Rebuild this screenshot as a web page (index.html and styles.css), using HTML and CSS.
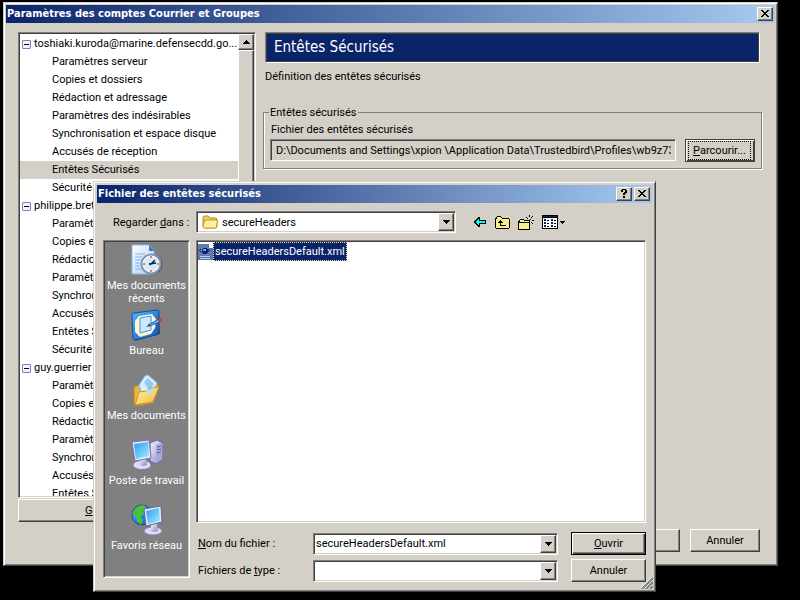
FILE: index.html
```html
<!DOCTYPE html>
<html lang="fr">
<head>
    <meta charset="UTF-8">
    <meta name="viewport" content="width=device-width, initial-scale=1.0">
    <title>Paramètres des comptes Courrier et Groupes</title>
    <link rel="stylesheet" href="styles.css">
</head>
<body>
    <div class="window accounts">
        <div class="titlebar">
            <h1>Paramètres des comptes Courrier et Groupes</h1>
            <button type="button" class="caption-button" aria-label="Fermer">
                <svg width="8" height="7" viewBox="0 0 8 7" shape-rendering="crispEdges"><path d="M0 0h2v1h1v1h2v-1h1v-1h2v1h-1v1h-1v1h-1v1h1v1h1v1h1v1h-2v-1h-1v-1h-2v1h-1v1h-2v-1h1v-1h1v-1h1v-1h-1v-1h-1v-1h-1z"/></svg>
            </button>
        </div>
        <div class="accounts-body">
            <div class="sidebar">
                <div class="tree">
                    <ul class="tree-list">
                        <li>
                            <div class="account"><button type="button" class="toggle" aria-label="Réduire"></button><span>toshiaki.kuroda@marine.defensecdd.go...</span></div>
                            <ul>
                                <li>Paramètres serveur</li>
                                <li>Copies et dossiers</li>
                                <li>Rédaction et adressage</li>
                                <li>Paramètres des indésirables</li>
                                <li>Synchronisation et espace disque</li>
                                <li>Accusés de réception</li>
                                <li class="selected">Entêtes Sécurisés</li>
                                <li>Sécurité</li>
                            </ul>
                        </li>
                        <li>
                            <div class="account"><button type="button" class="toggle" aria-label="Réduire"></button><span>philippe.bret</span></div>
                            <ul>
                                <li>Paramètres serveur</li>
                                <li>Copies et dossiers</li>
                                <li>Rédaction et adressage</li>
                                <li>Paramètres des indésirables</li>
                                <li>Synchronisation et espace disque</li>
                                <li>Accusés de réception</li>
                                <li>Entêtes Sécurisés</li>
                                <li>Sécurité</li>
                            </ul>
                        </li>
                        <li>
                            <div class="account"><button type="button" class="toggle" aria-label="Réduire"></button><span>guy.guerrier</span></div>
                            <ul>
                                <li>Paramètres serveur</li>
                                <li>Copies et dossiers</li>
                                <li>Rédaction et adressage</li>
                                <li>Paramètres des indésirables</li>
                                <li>Synchronisation et espace disque</li>
                                <li>Accusés de réception</li>
                                <li>Entêtes Sécurisés</li>
                            </ul>
                        </li>
                    </ul>
                    <div class="scrollbar">
                        <button type="button" class="arrow-button" aria-label="Haut">
                            <svg width="7" height="4" viewBox="0 0 7 4" shape-rendering="crispEdges"><path d="M3 0h1v1h1v1h1v1h1v1h-7v-1h1v-1h1v-1h1z"/></svg>
                        </button>
                        <div class="thumb"></div>
                    </div>
                </div>
                <button type="button" class="button manage"><u>G</u>estion des comptes</button>
            </div>
            <div class="panel">
                <h2>Entêtes Sécurisés</h2>
                <p>Définition des entêtes sécurisés</p>
                <fieldset>
                    <legend>Entêtes sécurisés</legend>
                    <label for="path">Fichier des entêtes sécurisés</label>
                    <div class="path-row">
                        <input type="text" id="path" readonly value="D:\Documents and Settings\xpion \Application Data\Trustedbird\Profiles\wb9z73me.default\secureHeaders">
                        <button type="button" class="button browse"><span><u>P</u>arcourir...</span></button>
                    </div>
                </fieldset>
            </div>
        </div>
        <div class="accounts-actions">
            <button type="button" class="button" aria-label="OK"></button>
            <button type="button" class="button">Annuler</button>
        </div>
    </div>

    <div class="window dialog">
        <div class="titlebar">
            <h1>Fichier des entêtes sécurisés</h1>
            <button type="button" class="caption-button" aria-label="Aide">
                <svg width="6" height="9" viewBox="0 0 6 9" shape-rendering="crispEdges"><path d="M1 0h4v1h1v3h-1v1h-1v1h-2v-2h1v-1h1v-2h-2v2h-2v-2h1zM2 7h2v2h-2z"/></svg>
            </button>
            <button type="button" class="caption-button" aria-label="Fermer">
                <svg width="8" height="7" viewBox="0 0 8 7" shape-rendering="crispEdges"><path d="M0 0h2v1h1v1h2v-1h1v-1h2v1h-1v1h-1v1h-1v1h1v1h1v1h1v1h-2v-1h-1v-1h-2v1h-1v1h-2v-1h1v-1h1v-1h1v-1h-1v-1h-1v-1h-1z"/></svg>
            </button>
        </div>
        <div class="lookin">
            <label for="folder">Regarder <u>d</u>ans :</label>
            <div class="combo">
                <svg class="folder-icon" width="16" height="16" viewBox="0 0 16 16">
                    <path d="M1 4q0-2 2-2h3l2 2h5q2 0 2 2v6q0 2-2 2h-10q-2 0-2-2z" fill="#f3cf55" stroke="#b88a18"/>
                    <path d="M1 12l2-6h12.500l-1 7q0 1-1 1h-11q-1 0-1.500-1z" fill="#fff0a0" stroke="#c3961f"/>
                </svg>
                <select id="folder"><option>secureHeaders</option></select>
                <span class="arrow-button"><svg width="7" height="4" viewBox="0 0 7 4" shape-rendering="crispEdges"><path d="M0 0h7v1h-1v1h-1v1h-1v1h-1v-1h-1v-1h-1v-1h-1z"/></svg></span>
            </div>
            <div class="tools">
                <button type="button" aria-label="Dossier précédent">
                    <svg width="13" height="10" viewBox="0 0 13 10" shape-rendering="crispEdges"><path d="M0 4h1v-1h1v-1h1v-1h1v-1h2v3h6v4h-6v3h-2v-1h-1v-1h-1v-1h-1v-1h-1z"/><path d="M2 4h1v-1h1v-1h1v2h6v2h-6v2h-1v-1h-1v-1h-1z" fill="#00ffff"/></svg>
                </button>
                <button type="button" aria-label="Dossier parent">
                    <svg width="15" height="13" viewBox="0 0 15 13" shape-rendering="crispEdges"><path d="M1 1h1v-1h4v1h1v1h7v1h1v9h-1v1h-13v-1h-1v-10h1z"/><path d="M2 1h4v1h1v1h7v9h-13v-9h1z" fill="#f4f090"/><path d="M3 6h1v-1h1v-1h1v1h1v1h1v1h-2v2h5v1h-6v-3h-2z"/></svg>
                </button>
                <button type="button" aria-label="Nouveau dossier">
                    <svg width="16" height="15" viewBox="0 0 16 15" shape-rendering="crispEdges"><path d="M1 5h1v-1h4v1h6v10h-12v-9h1z"/><path d="M2 5h4v1h5v8h-10v-6h1z" fill="#f4f090"/><path d="M1 7h10v1h-10zM11 0h1v2h-1zM8 2h1v1h-1zM9 3h1v1h-1zM14 1h1v1h-1zM13 2h1v1h-1zM12 4h1v1h-1zM14 5h2v1h-2zM13 7h1v1h-1zM14 8h1v1h-1zM11 7h1v2h-1z"/></svg>
                </button>
                <button type="button" class="views" aria-label="Affichage">
                    <svg width="23" height="14" viewBox="0 0 23 14" shape-rendering="crispEdges"><path d="M0 0h16v14h-16z"/><path d="M1 3h14v10h-14z" fill="#fff"/><path d="M1 1h14v1h-14zM2 4h2v2h-2zM2 7h2v2h-2zM2 10h2v2h-2zM9 4h2v2h-2zM9 7h2v2h-2zM9 10h2v2h-2z" fill="#0a246a"/><path d="M5 5h2v1h-2zM5 8h2v1h-2zM5 11h2v1h-2zM12 5h2v1h-2zM12 8h2v1h-2zM12 11h2v1h-2zM18 6h5v1h-1v1h-1v1h-1v-1h-1v-1h-1z"/></svg>
                </button>
            </div>
        </div>
        <div class="dialog-body">
            <div class="places">
                <a href="#">
                    <svg width="32" height="32" viewBox="0 0 32 32">
                        <defs>
                            <linearGradient id="paper" x1="0" y1="0" x2="1" y2="1"><stop offset="0" stop-color="#fff"/><stop offset="1" stop-color="#a9cdfa"/></linearGradient>
                            <linearGradient id="blue" x1="0" y1="0" x2="1" y2="1"><stop offset="0" stop-color="#5ab8f8"/><stop offset="1" stop-color="#0a50c4"/></linearGradient>
                            <linearGradient id="glass" x1="0" y1="0" x2="1" y2="1"><stop offset="0" stop-color="#2c9cf4"/><stop offset="1" stop-color="#a0f0ff"/></linearGradient>
                            <linearGradient id="gold" x1="0" y1="0" x2="1" y2="1"><stop offset="0" stop-color="#fff3a8"/><stop offset="1" stop-color="#f2b93c"/></linearGradient>
                            <linearGradient id="case" x1="0" y1="0" x2="1" y2="1"><stop offset="0" stop-color="#f4f4ff"/><stop offset="1" stop-color="#8684c4"/></linearGradient>
                        </defs>
                        <path d="M1 1h17l5 6v23h-22z" fill="url(#paper)" stroke="#8eb5ec"/>
                        <path d="M18 1v6h5z" fill="#3b78cf"/>
                        <path d="M4 10h10M4 13h7M4 16h6M4 19h5M4 22h6M4 25h8" stroke="#80b4f0"/>
                        <circle cx="21.500" cy="20.500" r="10" fill="#4c5868"/>
                        <circle cx="20" cy="20" r="9.500" fill="#f4faff" stroke="#8198ad" stroke-width="2"/>
                        <circle cx="20" cy="20" r="7" fill="#d2eaff"/>
                        <path d="M18 20l7-1M19 21l5-5" stroke="#123" stroke-width="1.500"/>
                        <path d="M20 12v2M20 26v2M12 20h2M26 20h2" stroke="#e06030" stroke-width="1.500"/>
                    </svg>
                    <span>Mes documents récents</span>
                </a>
                <a href="#">
                    <svg width="32" height="32" viewBox="0 0 32 32">
                        <path d="M3 6l25-3 1 22-25 7z" fill="#37485f"/>
                        <path d="M1 6q0-2 2-2l23-3q2 0 2 2l-1 21q0 2-2 2l-21 5q-2 0-2-2z" fill="url(#blue)" stroke="#0b4fae"/>
                        <path d="M8 7l13-2 4 5-1 9-4 6-11 3-5-5v-11z" fill="#fff7cf"/>
                        <path d="M9 9l11-2v14l-11 3z" fill="#c9eaff" stroke="#4292df"/>
                        <path d="M17 16l11-6 1 3-11 4z" fill="#6ab4f0" stroke="#1a5cb0"/>
                        <path d="M15 18l3-2 1 1z" fill="#111"/>
                        <circle cx="29" cy="11" r="2" fill="#d33a18"/>
                    </svg>
                    <span>Bureau</span>
                </a>
                <a href="#">
                    <svg width="32" height="32" viewBox="0 0 32 32">
                        <path d="M3 13l5-2 3 2 14-5 3 5-6 16-17 3-2-1z" fill="#edb73d" stroke="#c2861a"/>
                        <path d="M8 11l6-9 3-1 9 8-5 10-10 1z" fill="#d8efff" stroke="#83bdf0"/>
                        <path d="M13 8l4-4 6 6-5 7z" fill="#93cbf7"/>
                        <path d="M4 31l4-13 8-1 3-3 9-1-6 15z" fill="url(#gold)" stroke="#c98d20"/>
                        <path d="M14 17l10-4-4 8z" fill="#b6dcf6"/>
                    </svg>
                    <span>Mes documents</span>
                </a>
                <a href="#">
                    <svg width="32" height="32" viewBox="0 0 32 32">
                        <path d="M19 4l7-3 6 3v17l-7 4-6-3z" fill="url(#case)" stroke="#6765a6"/>
                        <path d="M25 6l6-2v16l-6 3z" fill="#aaa8db"/>
                        <path d="M26 8l4-1M26 11l4-1M26 14l4-1" stroke="#5c5a99"/>
                        <path d="M28 17h2v2h-2z" fill="#84d45a"/>
                        <ellipse cx="11" cy="26" rx="9" ry="4.500" fill="#dddcf2" stroke="#8280ba"/>
                        <path d="M9 19h6l1 7q-4 2-7 0z" fill="url(#case)"/>
                        <path d="M1 3l17-2 2 18-16 3z" fill="#e8e8fa" stroke="#7775b0"/>
                        <path d="M3 5l14-2 1 14-13 3z" fill="url(#glass)"/>
                    </svg>
                    <span>Poste de travail</span>
                </a>
                <a href="#">
                    <svg width="32" height="32" viewBox="0 0 32 32">
                        <circle cx="11" cy="11" r="10" fill="url(#blue)" stroke="#1848a0"/>
                        <path d="M4 5q4-4 9-4l2 3-3 3 1 3-4 2 3 4-2 5-4-4-1-5-4-2z" fill="#48c431"/>
                        <ellipse cx="22" cy="27" rx="9" ry="4" fill="#dddcf2" stroke="#8280ba"/>
                        <path d="M20 20h6l1 7q-4 2-7 0z" fill="url(#case)"/>
                        <path d="M13 5l17-3 1 16-16 4z" fill="#e8e8fa" stroke="#6563a3"/>
                        <path d="M15 7l13-3 1 13-12 3z" fill="url(#glass)"/>
                    </svg>
                    <span>Favoris réseau</span>
                </a>
            </div>
            <div class="content">
                <ul class="files">
                    <li>
                        <svg width="16" height="16" viewBox="0 0 16 16" shape-rendering="crispEdges"><path d="M1 0h11l4 4v12h-15z" fill="#6478b4"/><path d="M12 0h1v1h1v1h1v1h1v1h-4z" fill="#fff"/><path d="M2 6h1v-1h1v1h-1v1h1v1h-1v-1h-1zM13 6h-1v-1h-1v1h1v1h-1v1h1v-1h1z" fill="#0a246a"/><path d="M6 4h4v1h1v4h-1v1h-4v-1h-1v-4h1z" fill="#0a246a"/><path d="M6 5h3v2h-3z" fill="#78a4d8"/><path d="M3 12h10v1h-10zM3 14h10v1h-10z" fill="#b4c8ec"/></svg>
                        <span>secureHeadersDefault.xml</span>
                    </li>
                </ul>
                <div class="fields">
                    <label for="filename"><u>N</u>om du fichier :</label>
                    <div class="combo">
                        <input type="text" id="filename" value="secureHeadersDefault.xml">
                        <button type="button" class="arrow-button" aria-label="Liste"><svg width="7" height="4" viewBox="0 0 7 4" shape-rendering="crispEdges"><path d="M0 0h7v1h-1v1h-1v1h-1v1h-1v-1h-1v-1h-1v-1h-1z"/></svg></button>
                    </div>
                    <button type="button" class="button default"><u>O</u>uvrir</button>
                    <label for="filetype">Fichiers de <u>t</u>ype :</label>
                    <div class="combo">
                        <select id="filetype"><option></option></select>
                        <span class="arrow-button"><svg width="7" height="4" viewBox="0 0 7 4" shape-rendering="crispEdges"><path d="M0 0h7v1h-1v1h-1v1h-1v1h-1v-1h-1v-1h-1v-1h-1z"/></svg></span>
                    </div>
                    <button type="button" class="button">Annuler</button>
                </div>
            </div>
        </div>
        <svg class="grip" width="12" height="12" viewBox="0 0 12 12"><path d="M0 11L11 0M4 11L11 4M8 11L11 8" stroke="#fff"/><path d="M1 12L12 1M5 12L12 5M9 12L12 9" stroke="#808080" stroke-width="2"/></svg>
    </div>
</body>
</html>
```

FILE: styles.css
```css
* {
    box-sizing: border-box;
}

body {
    margin: 0;
    height: 100vh;
    display: flex;
    padding: 2px 22px 34px 3px;
    background: #000;
    color: #000;
    font-family: Roboto, Tahoma, sans-serif;
    font-size: 11px;
    line-height: 13px;
    overflow: hidden;
}

ul {
    list-style: none;
    margin: 0;
    padding: 0;
}

button, input, select {
    font: inherit;
    color: inherit;
    margin: 0;
    padding: 0;
    border: none;
    border-radius: 0;
    outline: none;
}

.window {
    display: flex;
    flex-direction: column;
    background: #d4d0c8;
    border: 1px solid;
    border-color: #d4d0c8 #404040 #404040 #d4d0c8;
    box-shadow: inset 1px 1px #fff, inset -1px -1px #808080;
}

.accounts {
    flex: 1;
    min-width: 0;
    padding: 2px;
}

.dialog {
    position: absolute;
    top: 181px;
    left: 93px;
    right: 144px;
    bottom: 8px;
    padding: 3px;
}

.titlebar {
    display: flex;
    align-items: center;
    flex: none;
    height: 18px;
    padding: 0 2px 0 1px;
    gap: 2px;
    background: linear-gradient(to right, #0a246a, #a6caf0);
}

.titlebar h1 {
    flex: 1;
    margin: 0;
    font-family: "DejaVu Sans Condensed", Tahoma, sans-serif;
    font-size: 11px;
    line-height: 18px;
    color: #fff;
    white-space: nowrap;
}

.caption-button, .arrow-button, .button, .thumb {
    display: flex;
    align-items: center;
    justify-content: center;
    flex: none;
    background: #d4d0c8;
    border: 1px solid;
    border-color: #fff #404040 #404040 #fff;
    box-shadow: inset -1px -1px #808080;
}

.caption-button {
    width: 16px;
    height: 14px;
    padding: 0 1px 1px 0;
}

.button {
    width: 70px;
    height: 23px;
    padding-bottom: 1px;
}

.accounts-body {
    flex: 1;
    min-height: 0;
    display: flex;
    gap: 7px;
    padding: 9px 13px 0 12px;
}

.sidebar {
    display: flex;
    flex-direction: column;
    flex: none;
    width: 238px;
}

.tree, .files, .places, .combo, .path-row input, .panel h2 {
    border: 1px solid;
    border-color: #808080 #fff #fff #808080;
    box-shadow: inset 1px 1px #404040, inset -1px -1px #d4d0c8;
}

.tree {
    flex: 1;
    min-height: 0;
    display: flex;
    padding: 1px;
    background: #fff;
}

.tree-list {
    flex: 1;
    min-width: 0;
    padding-top: 1px;
    overflow: hidden;
    line-height: 18px;
    white-space: nowrap;
}

.tree-list ul li {
    padding-left: 32px;
}

.tree-list .selected {
    background: #d4d0c8;
}

.account {
    display: flex;
    align-items: center;
    gap: 3px;
    padding-left: 2px;
}

.toggle {
    flex: none;
    width: 9px;
    height: 9px;
    border: 1px solid #7b7fc4;
    border-radius: 1px;
    background: linear-gradient(#000, #000) center / 5px 1px no-repeat #f4f4fa;
}

.scrollbar {
    display: flex;
    flex-direction: column;
    width: 16px;
}

.arrow-button {
    width: 16px;
    height: 16px;
}

.thumb {
    flex: 1;
}

.manage {
    width: auto;
    margin-top: 1px;
}

.panel {
    flex: 1;
    min-width: 0;
}

.panel h2 {
    margin: 0 2px;
    height: 31px;
    padding-left: 8px;
    background: #0a246a;
    box-shadow: inset 0 0 0 1px #404040;
    color: #fff;
    font-family: "DejaVu Sans Condensed", Tahoma, sans-serif;
    font-size: 15px;
    font-weight: normal;
    line-height: 29px;
}

.panel p {
    margin: 7px 2px 23px;
}

fieldset {
    margin: 0;
    min-width: 0;
    padding: 4px 6px 6px;
    border: 1px solid #808080;
    box-shadow: inset 1px 0 #fff, 1px 1px #fff;
}

legend {
    margin-left: -1px;
    padding: 0 1px;
}

fieldset label {
    display: block;
    margin: 0 1px 3px;
}

.path-row {
    display: flex;
    gap: 9px;
    align-items: flex-start;
}

.path-row input {
    flex: 1;
    min-width: 0;
    height: 22px;
    padding: 0 4px 0 5px;
    background: #d4d0c8;
}

.browse {
    border-color: #404040;
    box-shadow: inset 1px 1px #fff, inset -1px -1px #404040;
    padding: 0;
}

.browse span {
    border: 1px dotted #000;
    padding: 2px 4px;
    margin-right: 1px;
}

.accounts-actions {
    display: flex;
    justify-content: flex-end;
    gap: 10px;
    padding: 7px 15px 11px;
}

.lookin {
    display: flex;
    align-items: center;
    padding: 8px 6px 7px 16px;
}

.lookin label {
    width: 83px;
}

.combo {
    display: flex;
    align-items: center;
    height: 22px;
    padding: 2px 1px 2px 2px;
    background: #fff;
}

.combo input, .combo select {
    flex: 1;
    min-width: 0;
    height: 18px;
    padding-left: 0;
    appearance: none;
    background: #fff;
}

.combo .arrow-button {
    height: 18px;
}

.combo span.arrow-button {
    pointer-events: none;
}

.folder-icon {
    flex: none;
    margin: 0 4px 0 3px;
}

.lookin .combo {
    flex: 1;
}

.tools {
    display: flex;
    align-items: center;
    gap: 8px;
    flex: none;
    width: 190px;
    padding-left: 18px;
}

.tools button {
    display: flex;
    background: none;
}

.dialog-body {
    flex: 1;
    min-height: 0;
    display: flex;
    gap: 6px;
    padding: 0 6px;
}

.places {
    display: flex;
    flex-direction: column;
    flex: none;
    width: 87px;
    margin-bottom: 10px;
    padding: 3px 1px;
    background: #808080;
}

.places a {
    display: flex;
    flex-direction: column;
    align-items: center;
    gap: 3px;
    height: 65px;
    color: #fff;
    text-align: center;
    text-decoration: none;
}

.content {
    flex: 1;
    min-width: 0;
    display: flex;
    flex-direction: column;
    margin-bottom: 6px;
}

.files {
    flex: 1;
    padding: 1px 0;
    background: #fff;
}

.files li {
    display: flex;
    align-items: center;
}

.files span {
    padding: 2px 1px;
    border: 1px dotted #f5db95;
    background: #0a246a;
    color: #fff;
}

.fields {
    display: grid;
    grid-template-columns: 115px 1fr 75px;
    align-items: center;
    gap: 4px 0;
    padding: 9px 0 0 2px;
}

.fields .combo {
    margin-right: 13px;
}

.fields .button {
    width: 75px;
}

.default {
    border-color: #000;
    box-shadow: inset 1px 1px #fff, inset -1px -1px #404040, inset -2px -2px #808080;
}

.grip {
    position: absolute;
    right: 2px;
    bottom: 2px;
}
```
